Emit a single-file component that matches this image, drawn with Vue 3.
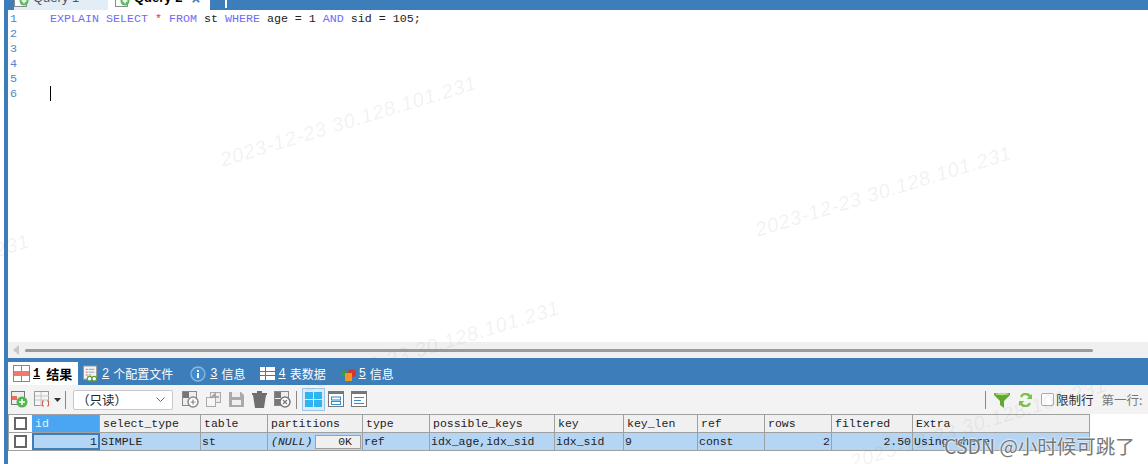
<script setup>
const lines = [1, 2, 3, 4, 5, 6]
const cols = [
  { n: 'id', w: 68, v: '1', right: true, active: true },
  { n: 'select_type', w: 101, v: 'SIMPLE' },
  { n: 'table', w: 67, v: 'st' },
  { n: 'partitions', w: 95, v: '(NULL)', nul: true },
  { n: 'type', w: 67, v: 'ref' },
  { n: 'possible_keys', w: 125, v: 'idx_age,idx_sid' },
  { n: 'key', w: 69, v: 'idx_sid' },
  { n: 'key_len', w: 74, v: '9' },
  { n: 'ref', w: 67, v: 'const' },
  { n: 'rows', w: 67, v: '2', right: true },
  { n: 'filtered', w: 81, v: '2.50', right: true },
  { n: 'Extra', w: 177, v: 'Using where' }
]
const marks = [
  { l: 215, t: 110 },
  { l: 750, t: 180 },
  { l: 298, t: 335 },
  { l: -232, t: 268 },
  { l: 845, t: 412 }
]
</script>

<template>
  <div class="app">
    <div class="topbar">
      <div class="qtab q1">
        <svg class="qicon" width="15" height="14" viewBox="0 0 15 14"><rect x=".5" y=".5" width="12" height="13" fill="#fff" stroke="#888"/><circle cx="10" cy="8" r="4.500" fill="#5cb85c"/><path d="M7.500 8h5M10 5.500v5" stroke="#fff" stroke-width="1.500"/></svg>
        <span>Query 1</span>
      </div>
      <div class="qtab q2">
        <svg class="qicon" width="15" height="14" viewBox="0 0 15 14"><rect x=".5" y=".5" width="12" height="13" fill="#fff" stroke="#888"/><circle cx="10" cy="8" r="4.500" fill="#5cb85c"/><path d="M7.500 8h5M10 5.500v5" stroke="#fff" stroke-width="1.500"/></svg>
        <span>Query 2</span>
        <b class="close">×</b>
      </div>
      <div class="newtab"></div>
    </div>

    <div class="editor">
      <div class="gutter"><div v-for="l in lines" :key="l">{{ l }}</div></div>
      <div class="code">
        <div><i class="k">EXPLAIN SELECT</i> <i class="s">*</i> <i class="k">FROM</i> st <i class="k">WHERE</i> age = 1 <i class="k">AND</i> sid = 105;</div>
        <div>&nbsp;</div><div>&nbsp;</div><div>&nbsp;</div><div>&nbsp;</div>
        <div class="caretline"><span class="caret"></span></div>
      </div>
    </div>

    <div class="hscroll">
      <svg width="7" height="10" viewBox="0 0 7 10"><path d="M6 0v10L0 5z" fill="#c8c8c8"/></svg>
      <div class="thumb"></div>
    </div>

    <div class="tabs">
      <div class="tab on">
        <svg width="17" height="17" viewBox="0 0 17 17"><rect x=".5" y=".5" width="16" height="16" fill="#fff" stroke="#888"/><rect x="1" y="6" width="15" height="5" fill="#f4786a"/><path d="M8.500 1v5M8.500 11v5" stroke="#888"/></svg>
        <span class="tt"><u>1</u><span>结果</span></span>
      </div>
      <div class="tab t2">
        <svg width="15" height="18" viewBox="0 0 16 18"><rect x=".5" y=".5" width="14" height="14" fill="#f4f4f4" stroke="#999"/><path d="M3 4h2M3 7h2M3 10h2" stroke="#d9534f"/><path d="M6 4h6M6 7h6M6 10h3" stroke="#999"/><circle cx="7" cy="14" r="2.500" fill="#fff" stroke="#5a9e3c" stroke-width="1.200"/><circle cx="12" cy="14" r="2.500" fill="#fff" stroke="#5a9e3c" stroke-width="1.200"/></svg>
        <span class="tt"><u>2</u><span>个配置文件</span></span>
      </div>
      <div class="tab t3">
        <svg width="16" height="16" viewBox="0 0 16 16"><circle cx="8" cy="8" r="7" fill="#3f8bcc" stroke="#8db8dc" stroke-width="1.300"/><rect x="7" y="7" width="2" height="5" fill="#fff"/><rect x="7" y="4" width="2" height="2" fill="#fff"/></svg>
        <span class="tt"><u>3</u><span>信息</span></span>
      </div>
      <div class="tab t4">
        <svg width="15" height="13" viewBox="0 0 15 13"><rect width="15" height="13" fill="#fff"/><path d="M0 4.500h15M0 8.500h15M5.500 0v13" stroke="#3d7db9"/></svg>
        <span class="tt"><u>4</u><span>表数据</span></span>
      </div>
      <div class="tab t5">
        <svg width="16" height="14" viewBox="0 0 16 14"><circle cx="12" cy="6" r="4" fill="#d9342b"/><path d="M4 2l4 7H0z" fill="#3a9e3a"/><rect x="5" y="6" width="7" height="8" fill="#f39a1e"/></svg>
        <span class="tt"><u>5</u><span>信息</span></span>
      </div>
    </div>

    <div class="toolbar">
      <svg class="ic i1" width="17" height="17" viewBox="0 0 17 17"><rect x=".5" y=".5" width="13" height="13" fill="#eee" stroke="#777"/><rect x="1" y="5" width="5" height="4" fill="#f06a5a"/><circle cx="11" cy="11" r="5.500" fill="#4fb84f"/><path d="M8 11h6M11 8v6" stroke="#fff" stroke-width="1.500"/></svg>
      <svg class="ic i2" width="17" height="17" viewBox="0 0 17 17"><rect x=".5" y=".5" width="14" height="14" fill="#f6f6f6" stroke="#999"/><path d="M1 5h14M1 9h14M7 1v14" stroke="#c4c4c4"/><rect x="8" y="10" width="7" height="6" fill="#f6f6f6"/><path d="M10 10H8.500v5H10M13 10h1.500v5H13" fill="none" stroke="#e0553f"/></svg>
      <svg class="drop" width="7" height="4" viewBox="0 0 7 4"><path d="M0 0h7L3.500 4z" fill="#333"/></svg>
      <span class="sep s1"></span>
      <div class="select">
        <span>（只读）</span>
        <svg width="9" height="5" viewBox="0 0 9 5"><path d="M.5.500l4 4 4-4" fill="none" stroke="#666"/></svg>
      </div>
      <div class="greys">
        <svg width="17" height="17" viewBox="0 0 17 17"><rect x=".5" y=".5" width="14" height="14" fill="#eee" stroke="#888"/><rect x="1" y="1" width="6" height="6" fill="#777"/><rect x="7" y="7" width="7" height="7" fill="#999"/><circle cx="11" cy="11" r="5" fill="#fff" stroke="#888" stroke-width="1.500"/><path d="M8.500 11h5M11 8.500v5" stroke="#888" stroke-width="1.200"/></svg>
        <svg width="17" height="17" viewBox="0 0 17 17"><rect x="5.500" y="1.500" width="10" height="10" fill="#eee" stroke="#aaa"/><rect x="1.500" y="6.500" width="9" height="9" fill="#f6f6f6" stroke="#aaa"/><path d="M6 7l4-4v3h4" fill="none" stroke="#999" stroke-width="1.500"/></svg>
        <svg width="17" height="17" viewBox="0 0 17 17"><path d="M1 1h12l3 3v12H1z" fill="#aaa"/><rect x="4" y="1" width="8" height="5" fill="#eee"/><rect x="4" y="9" width="9" height="5" fill="#f0f0f0"/></svg>
        <svg width="17" height="17" viewBox="0 0 17 17"><path d="M2 4h13l-2 13H4z" fill="#6f6f6f"/><rect x="1" y="2" width="15" height="2" fill="#6f6f6f"/><rect x="6" y="0" width="5" height="2" fill="#6f6f6f"/></svg>
        <svg width="17" height="17" viewBox="0 0 17 17"><rect x=".5" y=".5" width="14" height="14" fill="#eee" stroke="#888"/><rect x="1" y="1" width="6" height="6" fill="#777"/><rect x="1" y="8" width="6" height="6" fill="#777"/><circle cx="11" cy="11" r="5" fill="#fff" stroke="#777" stroke-width="1.500"/><path d="M9 9l4 4M13 9l-4 4" stroke="#777" stroke-width="1.200"/></svg>
      </div>
      <span class="sep s2"></span>
      <div class="gridbtn">
        <svg width="17" height="15" viewBox="0 0 17 15"><rect width="8" height="7" fill="#2eb4f0"/><rect x="9" width="8" height="7" fill="#2eb4f0"/><rect y="8" width="8" height="7" fill="#2eb4f0"/><rect x="9" y="8" width="8" height="7" fill="#2eb4f0"/></svg>
      </div>
      <svg class="ic v1" width="17" height="17" viewBox="0 0 17 17"><rect x=".5" y=".5" width="15" height="15" fill="#fff" stroke="#777"/><rect width="16" height="3" fill="#777"/><rect x="3.500" y="6" width="9" height="3" fill="none" stroke="#2d8ed0"/><rect x="3.500" y="10.500" width="9" height="3" fill="none" stroke="#2d8ed0"/></svg>
      <svg class="ic v2" width="17" height="17" viewBox="0 0 17 17"><rect x=".5" y=".5" width="15" height="15" fill="#fff" stroke="#777"/><rect width="16" height="3" fill="#777"/><path d="M3 6.500h10M3 9.500h7M3 12.500h10" stroke="#2d8ed0"/></svg>

      <div class="right">
        <span class="sep s3"></span>
        <svg width="16" height="16" viewBox="0 0 16 16"><path d="M0 1h16v2l-6 6v7l-4-3V9L0 3z" fill="#62a82e"/><ellipse cx="8" cy="2" rx="7" ry="1.200" fill="#b5e08c"/></svg>
        <svg class="refresh" width="13" height="14" viewBox="0 0 13 14"><path d="M11.500 5A5 5 0 0 0 2 4M1.500 9A5 5 0 0 0 11 10" fill="none" stroke="#7cc24a" stroke-width="2.300"/><path d="M7.500 6H13V1zM5.500 8H0v5z" fill="#7cc24a"/></svg>
        <span class="chk"></span>
        <span class="lim">限制行</span>
        <span class="firstrow">第一行:</span>
      </div>
    </div>

    <div class="grid">
      <div class="row head">
        <div class="corner"><span class="box"></span></div>
        <div v-for="c in cols" :key="c.n" class="cell" :class="{ act: c.active }" :style="{ width: c.w + 'px' }">{{ c.n }}</div>
      </div>
      <div class="row data">
        <div class="corner"><span class="box"></span></div>
        <div
          v-for="c in cols"
          :key="c.n"
          class="cell"
          :class="{ rt: c.right, act: c.active, nul: c.nul }"
          :style="{ width: c.w + 'px' }"
        >
          <em v-if="c.nul">{{ c.v }}</em>
          <template v-else>{{ c.v }}</template>
          <span v-if="c.nul" class="okbox">0K</span>
        </div>
      </div>
    </div>

    <div class="marks">
      <span v-for="(m, i) in marks" :key="i" class="mark" :style="{ left: m.l + 'px', top: m.t + 'px' }">2023-12-23 30.128.101.231</span>
    </div>
    <div class="csdn">CSDN @小时候可跳了</div>
  </div>
</template>

<style>
html, body { margin: 0; padding: 0; background: #fff; }
</style>

<style scoped>
.app {
  position: relative;
  width: 1148px;
  height: 464px;
  overflow: hidden;
  background: #fff;
  box-sizing: border-box;
  padding-left: 8px;
  font-family: "Noto Sans CJK SC", "Liberation Sans", sans-serif;
  font-size: 12px;
  color: #222;
}
.app::before {
  content: "";
  position: absolute;
  left: 4px;
  top: 0;
  bottom: 0;
  width: 4px;
  background: #3c7dba;
}
.topbar {
  height: 10px;
  margin-left: -4px;
  padding-left: 10px;
  background: #3c7dba;
  display: flex;
  overflow: hidden;
}
.qtab {
  height: 10px;
  display: flex;
  align-items: flex-end;
  font-family: "Liberation Sans", sans-serif;
  font-size: 13px;
  line-height: 16px;
  overflow: hidden;
  box-sizing: border-box;
}
.qtab span { position: relative; top: -4px; }
.qicon { flex: none; position: relative; top: -3px; }
.q1 { width: 94px; background: #e3edf6; color: #555; gap: 4px; }
.q2 { width: 102px; background: #fff; color: #000; font-weight: 700; padding-left: 7px; gap: 4px; }
.close { color: #3c7dba; margin-left: 5px; font-size: 15px; position: relative; top: -3px; }
.newtab { width: 2px; height: 8px; background: #fff; margin-left: 15px; }

.editor {
  height: 332px;
  box-sizing: border-box;
  padding-top: 2px;
  display: flex;
  background: #fff;
  font-family: "Liberation Mono", monospace;
  font-size: 11.66px;
  line-height: 15px;
}
.gutter { width: 42px; padding-left: 2px; box-sizing: border-box; color: #4a86c8; }
.code { color: #222; white-space: pre; }
.k { font-style: normal; color: #6f6cf2; }
.s { font-style: normal; color: #d0402f; }
.caretline { height: 15px; display: flex; }
.caret { width: 1px; height: 15px; margin-top: -1px; background: #000; }

.hscroll {
  height: 16px;
  background: #f0f0f0;
  display: flex;
  align-items: center;
  padding-left: 5px;
  gap: 5px;
}
.thumb { width: 1068px; height: 3px; border-radius: 2px; background: #9b9b9b; }

.tabs {
  height: 27px;
  background: #3c7dba;
  display: flex;
  align-items: flex-end;
  color: #fff;
  font-size: 12px;
}
.tab {
  height: 23px;
  display: flex;
  align-items: center;
  gap: 4px;
  white-space: nowrap;
}
.tt { display: flex; gap: 4px; align-items: center; }
.tab u { font-family: "Liberation Mono", monospace; font-size: 12px; }
.on {
  width: 70px;
  box-sizing: border-box;
  padding-left: 5px;
  background: #fff;
  color: #000;
  font-weight: 700;
  font-size: 13px;
  gap: 3px;
}
.on .tt { gap: 6px; }
.t2 { margin-left: 5px; }
.t3 { margin-left: 17px; }
.t4 { margin-left: 15px; gap: 3px; }
.t5 { margin-left: 14px; gap: 3px; }

.toolbar {
  height: 29px;
  background: #f3f3f3;
  display: flex;
  align-items: center;
}
.ic { flex: none; }
.i1 { margin-left: 3px; }
.i2 { margin-left: 6px; }
.drop { margin-left: 3px; }
.sep { width: 1px; height: 18px; background: #888; flex: none; }
.s1 { margin-left: 4px; }
.select {
  width: 100px;
  height: 20px;
  box-sizing: border-box;
  margin-left: 7px;
  padding: 0 7px 0 3px;
  background: #fff;
  border: 1px solid #c8c8c8;
  border-radius: 2px;
  display: flex;
  align-items: center;
  justify-content: space-between;
  font-size: 12.5px;
}
.greys { display: flex; gap: 6px; margin-left: 9px; }
.s2 { margin-left: 5px; }
.gridbtn {
  width: 23px;
  height: 23px;
  box-sizing: border-box;
  margin-left: 5px;
  background: #dcebf8;
  border: 1px solid #9cc6e8;
  display: flex;
  align-items: center;
  justify-content: center;
}
.v1 { margin-left: 3px; }
.v2 { margin-left: 6px; }
.right {
  margin-left: auto;
  display: flex;
  align-items: center;
  width: 163px;
  flex: none;
}
.s3 { margin-right: 8px; }
.refresh { margin-left: 9px; }
.chk {
  width: 11px;
  height: 11px;
  margin-left: 9px;
  background: #fff;
  border: 1px solid #aaa;
  border-radius: 2px;
}
.lim { margin-left: 2px; font-size: 12.5px; color: #333; }
.firstrow { margin-left: 8px; font-size: 12.5px; color: #777; white-space: nowrap; }

.grid {
  width: 1082px;
  font-family: "Liberation Mono", monospace;
  font-size: 11.5px;
  border-left: 1px solid #a0a0a0;
  box-sizing: border-box;
}
.row { display: flex; border-bottom: 1px solid #a0a0a0; }
.head { height: 17px; background: #f0f0f0; border-top: 1px solid #a0a0a0; }
.data { height: 17px; background: #b5d5f5; }
.corner {
  width: 23px;
  flex: none;
  background: #fff;
  display: flex;
  align-items: center;
  justify-content: center;
}
.box { width: 9px; height: 9px; border: 2px solid #666; background: #fff; }
.cell {
  flex: none;
  box-sizing: border-box;
  padding: 0 1px;
  line-height: 16px;
  border-right: 1px solid #a0a0a0;
  white-space: nowrap;
  overflow: hidden;
  display: flex;
  justify-content: flex-start;
  align-items: center;
}
.head .cell { padding-left: 3px; }
.head .act { background: #4aa6f2; color: #e6f1fb; }
.data .act { background: #b5d5f5; border: 2px solid #3c7dba; height: 17px; }
.rt { justify-content: flex-end; }
.nul { justify-content: space-between; padding: 0 1px 0 3px; }
.nul em { font-style: italic; }
.okbox {
  width: 46px;
  height: 14px;
  box-sizing: border-box;
  padding-right: 8px;
  background: #f0f0f0;
  border: 1px solid #a0a0a0;
  text-align: right;
  line-height: 12px;
}

.marks { position: absolute; inset: 0; pointer-events: none; }
.mark {
  position: absolute;
  font-family: "Liberation Sans", sans-serif;
  font-style: italic;
  font-size: 20px;
  letter-spacing: 0.8px;
  color: rgba(120, 120, 120, 0.1);
  white-space: nowrap;
  transform: rotate(-17deg);
}
.csdn {
  position: absolute;
  left: 944px;
  top: 433px;
  font-size: 19.500px;
  line-height: 25px;
  color: #777;
  text-shadow: 0 0 2px #fff, 0 0 2px #fff;
  white-space: nowrap;
}
</style>
